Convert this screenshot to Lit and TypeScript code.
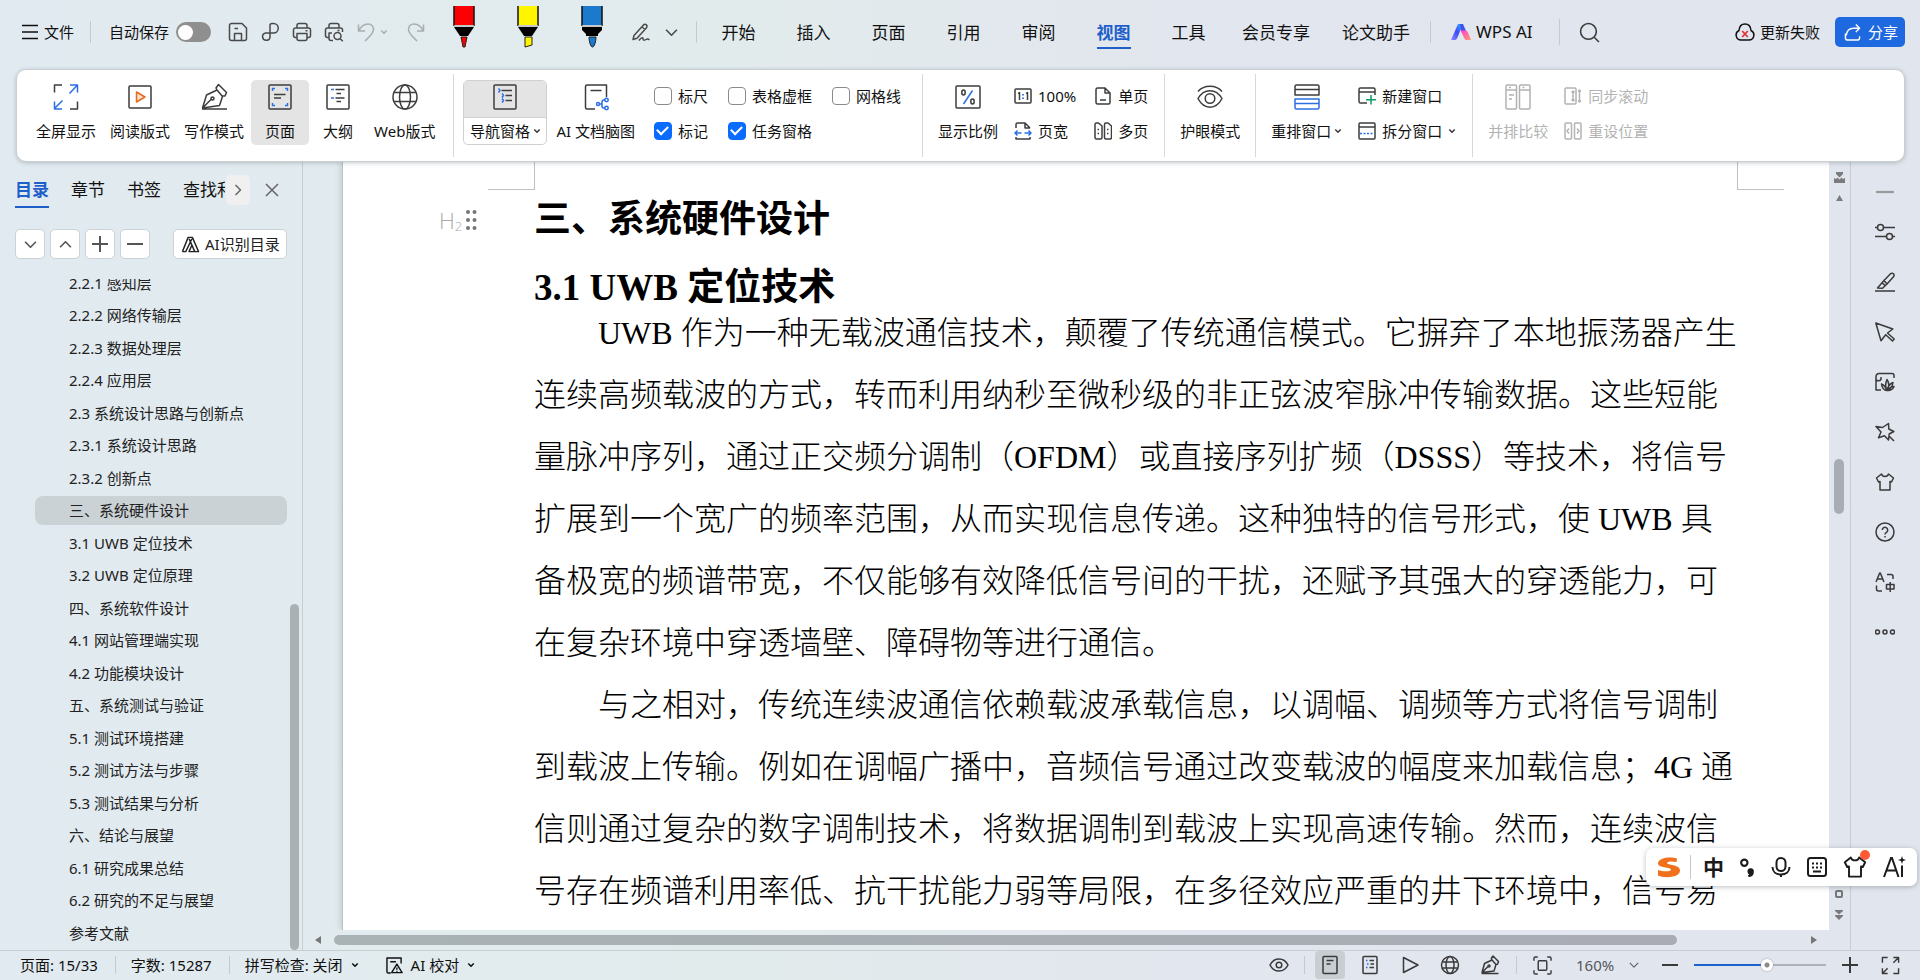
import { LitElement, html, css, svg, nothing } from "lit";
import { customElement, state } from "lit/decorators.js";
import { classMap } from "lit/directives/class-map.js";

/* ---------- icon library: [viewBox, content] ---------- */
const I: Record<string, [number, number, unknown]> = {
  menu: [16, 16, svg`<path d="M0 1.5h16M0 8h16M0 14.5h16"/>`],
  save: [20, 20, svg`<path d="M1.5 3.5a2 2 0 0 1 2-2H14l4.5 4.5v10.500a2 2 0 0 1-2 2h-13a2 2 0 0 1-2-2zM6.500 18v-6.500h7V18M6.500 6.500h3.500"/>`],
  pdf: [20, 20, svg`<path d="M10 14.500V3.500a2 2 0 0 1 2-2h1.500a4.750 4.750 0 0 1 0 9.500H5.500a3.700 3.700 0 1 0 4.500 3.500"/>`],
  print: [20, 20, svg`<path d="M5 6V3.500a2 2 0 0 1 2-2h6a2 2 0 0 1 2 2V6M5 15.500H3.500a2 2 0 0 1-2-2V8a2 2 0 0 1 2-2h13a2 2 0 0 1 2 2v5.500a2 2 0 0 1-2 2H15M5 11.500h10v5a2 2 0 0 1-2 2H7a2 2 0 0 1-2-2zM13.500 8.800h2"/>`],
  preview: [20, 20, svg`<path d="M5 6V3.500a2 2 0 0 1 2-2h6a2 2 0 0 1 2 2V6M18.500 10V8a2 2 0 0 0-2-2h-13a2 2 0 0 0-2 2v5.500a2 2 0 0 0 2 2H5M8 11H5v5.500a2 2 0 0 0 2 2h2M13.500 8.500h2"/><circle cx="13.500" cy="14" r="3.500"/><path d="M16.200 16.700l2.600 2.500"/>`],
  undo: [20, 20, svg`<path d="M2.500 2.500v6.500h6.500M2.700 8.800C5 4.500 8.500 2 12 2c3.500 0 5.500 2.500 5.500 5.500 0 2.800-2 5-5 8l-3.500 3.500"/>`],
  redo: [20, 20, svg`<path d="M17.500 2.500v6.500h-6.500M17.300 8.800C15 4.500 11.500 2 8 2 4.500 2 2.500 4.500 2.500 7.500c0 2.800 2 5 5 8l3.500 3.500"/>`],
  down: [12, 12, svg`<path d="M1 3.500l5 5 5-5"/>`],
  up: [12, 12, svg`<path d="M1 8.500l5-5 5 5"/>`],
  right: [12, 12, svg`<path d="M3.500 1l5 5-5 5"/>`],
  tiny: [8, 8, svg`<path d="M1.300 2.500L4 5.200l2.700-2.700" stroke-width="1.600"/>`],
  sign: [20, 20, svg`<path d="M3 13.500L12.500 3a2 2 0 0 1 3 2.700L6 16.200l-4 1.300zM11 5l3 2.500M8 18.500c2-3 4-3.500 4-1.800s1.500 1.800 3 .8 2.500-.5 3.500.3"/>`],
  search: [20, 20, svg`<circle cx="9" cy="9" r="7.500"/><path d="M14.500 14.500l4.500 4.500"/>`],
  cloudx: [20, 20, svg`<path d="M6 18a5 5 0 0 1-2-9.500C4.300 4.500 6.500 2 10 2s5.700 2.500 6 6.500A5 5 0 0 1 14 18z"/><path d="M7.200 9l5.600 6M12.800 9L7.200 15" stroke="#e03535" stroke-width="1.800"/>`],
  share: [18, 20, svg`<path d="M1.500 11v4.500a2.500 2.500 0 0 0 2.500 2.500h10a2.500 2.500 0 0 0 2.500-2.500V14M2.500 13C3 8 6 5.500 10 5.500h6.500M12.500 1.500l4 4-4 4"/>`],
  full: [28, 28, svg`<path d="M2.500 9.500V2H10M25.500 18.500V26H18"/><path d="M17.500 10.500L25 2.500M18 2h7.500v7.500M10.500 17.500L3 25M2.500 18.500V26H10" stroke="#2b6fe3"/>`],
  read: [28, 28, svg`<rect x="3" y="3" width="22" height="22" rx="1"/><path d="M10.500 9v10l8.500-5z" fill="#fbe0cf" stroke="#e56a22"/>`],
  write: [28, 28, svg`<path d="M2 26h25M2.500 25L6.500 12 17 7l5.500 6.500-3 9L2.500 25l9-9M17 7l-1-2 2.500-3.500 8 8L25 13h-2.500"/><circle cx="12.500" cy="15.500" r="1.500"/>`],
  page: [28, 28, svg`<rect x="3" y="2" width="22" height="24" rx="1"/><path d="M8 11.500h11.500M8 15h7"/><path d="M6.500 8V5.500H9M19 5.500h2.500V8M6.500 20v2.500H9M19 22.500h2.500V20" stroke="#2b6fe3"/>`],
  outline: [28, 28, svg`<rect x="3" y="2" width="22" height="24" rx="1"/><path d="M11.500 6.500h9M12.500 10.500h4.500M11.500 15h9M12.500 18.500h4.500"/><path d="M7 6.500h3M7 15h3" stroke="#2b6fe3"/>`],
  globe: [28, 28, svg`<circle cx="14" cy="14" r="12"/><ellipse cx="14" cy="14" rx="5.500" ry="12"/><path d="M3.200 9.500h21.600M3.200 18.500h21.600"/>`],
  nav: [28, 28, svg`<rect x="3" y="2" width="22" height="24" rx="1"/><path d="M10.500 7.500h10.500M14.500 12.500h6.500M14.500 17.500h6.500"/><path d="M7.500 5.500l1.500 2-1.500 2M11 10.500l1.500 2-1.500 2M11 15.500l1.500 2-1.500 2" stroke="#2b6fe3"/>`],
  mind: [28, 28, svg`<path d="M13 26H5a1.500 1.500 0 0 1-1.500-1.500v-21A1.500 1.500 0 0 1 5 2h19.500v12M8.500 7.500h11"/><g stroke="#2b6fe3"><path d="M17.500 21h2.500m3-4h-1a2 2 0 0 0-2 2v4a2 2 0 0 0 2 2h1"/><circle cx="24.500" cy="17" r="1.700"/><circle cx="24.500" cy="25" r="1.700"/><circle cx="16" cy="21" r="1.500"/></g>`],
  ratio: [28, 28, svg`<rect x="2" y="3" width="24" height="22" rx="1"/><path d="M18.500 7.500L9.500 21" stroke="#2b6fe3"/><ellipse cx="9.500" cy="9.500" rx="1.700" ry="2.500"/><ellipse cx="18.500" cy="18.500" rx="1.700" ry="2.500"/>`],
  one: [18, 18, svg`<rect x="1" y="2" width="16" height="14" rx="1"/><path d="M4 6.500l1.500-1v7.500M12 6.500l1.500-1v7.500"/><path d="M9 7v1.500M9 10.500V12" stroke="#2b6fe3" stroke-width="1.800"/>`],
  single: [18, 18, svg`<path d="M11 1H3.500A1.500 1.500 0 0 0 2 2.500v13A1.500 1.500 0 0 0 3.500 17h11a1.500 1.500 0 0 0 1.500-1.500V6zM11 1v5h5M6 13h6"/>`],
  pwide: [18, 18, svg`<path d="M2 6V2.500A1.500 1.500 0 0 1 3.500 1H11l5 5M11 1v5h5M2 15v2h14v-2"/><path d="M7.500 11h-6.500M3.500 8.500L1 11l2.500 2.500M10.500 11h6.500M14.500 8.500L17 11l-2.500 2.500" stroke="#2b6fe3"/>`],
  multi: [18, 18, svg`<path d="M1 2.500A1.500 1.500 0 0 1 2.500 1h2L8 4v11.500A1.500 1.500 0 0 1 6.500 17h-4A1.500 1.500 0 0 1 1 15.500zM10.500 2.500A1.500 1.500 0 0 1 12 1h2l3.500 3v11.500A1.500 1.500 0 0 1 16 17h-4a1.500 1.500 0 0 1-1.500-1.500zM3.500 7.500H5M3.500 11.500H5M13 7.500h1.500M13 11.500h1.500"/>`],
  eye: [28, 28, svg`<path d="M2 8.500C8 1.500 20 1.500 26 8.500"/><path d="M2 15.500C8 5 20 5 26 15.500 20 27 8 27 2 15.500z"/><circle cx="14" cy="15.500" r="4.800"/>`],
  arrange: [28, 28, svg`<path d="M2 3.500A1.500 1.500 0 0 1 3.500 2h21A1.500 1.500 0 0 1 26 3.500V12H2zM2 6.500h24"/><path d="M2 16h24v8.500a1.500 1.500 0 0 1-1.500 1.500h-21A1.500 1.500 0 0 1 2 24.500zM2 20.500h24" stroke="#2b6fe3"/>`],
  newwin: [18, 18, svg`<path d="M9 16H2.500A1.500 1.500 0 0 1 1 14.500v-12A1.500 1.500 0 0 1 2.500 1h13A1.500 1.500 0 0 1 17 2.500V8M1 5h16"/><path d="M13 8v9.500M8 12.700h10" stroke="#0d9a62"/>`],
  split: [18, 18, svg`<rect x="1" y="1" width="16" height="16" rx="1"/><path d="M1 5h16"/><path d="M2 11.500h14" stroke="#2b6fe3" stroke-dasharray="2 1.500"/>`],
  compare: [28, 28, svg`<rect x="2" y="2" width="10.500" height="24" rx="1"/><rect x="15.500" y="2" width="10.500" height="24" rx="1"/><path d="M2 7h10.500M15.500 7H26M5 4.500h2M18.500 4.500h2M5 12h5M5 16h3"/>`],
  sync: [18, 18, svg`<rect x="1" y="1" width="11" height="16" rx="1"/><path d="M9 4v10M7.500 5.500L9 4l1.500 1.500M7.500 12.500L9 14l1.500-1.500M15.500 3v12M14 4.500L15.500 3 17 4.500M14 13.500l1.500 1.500 1.500-1.500"/>`],
  reset: [18, 18, svg`<rect x="1" y="1" width="6.500" height="16" rx="1"/><rect x="10.500" y="1" width="6.500" height="16" rx="1"/><path d="M5 6.500L3 9l2 2.500M13 6.500L15 9l-2 2.500"/>`],
  x: [16, 16, svg`<path d="M2 2l12 12M14 2L2 14"/>`],
  plus: [18, 18, svg`<path d="M9 1v16M1 9h16" stroke-width="2"/>`],
  minus: [18, 18, svg`<path d="M1 9h16" stroke-width="2"/>`],
  ai: [20, 20, svg`<path d="M1.500 17.500L7.500 2.500h4.500L18.500 17.500H14.500L8.500 4M1.500 17.500H5L11.500 4M8.500 17.500h6l-3-7z"/>`],
  sliders: [20, 20, svg`<circle cx="5.500" cy="5.500" r="3"/><path d="M0 5.500h2.500M8.500 5.500H20"/><circle cx="14.500" cy="14.500" r="3"/><path d="M0 14.500h11.500M17.500 14.500H20"/>`],
  marker: [20, 20, svg`<path d="M0 19h20M2.500 16L9 8.500l6.500-6.700a2 2 0 0 1 3 3L12 12l-4.500 4.300zM9 8.500l3 3.500M7.200 10.800l2.700 2.800"/>`],
  cursor: [20, 20, svg`<path d="M.8 1l17 6-5.300 4 6.700 6-1.700 2-6.800-6.300-4.700 6z"/>`],
  image: [20, 20, svg`<path d="M19 6V3.500a2 2 0 0 0-2-2H4a3 3 0 0 0-3 3V18h5M1 7.500a3 3 0 0 0 5 0V5"/><path d="M12 18.500c-2-4-1.500-8 0-11 2 3 2.500 7 0 11zM11.500 18.500C8.500 18 7 15.500 6.500 12c2.500 1 4.500 3 5 6.500zM12.500 18.500c0-4 2-6.500 5.500-8-.5 3-1.500 6.500-5.500 8zM13 18.500c1.500-3 3.500-4 6-4-1 2.500-3 4-6 4z"/>`],
  star: [20, 20, svg`<path d="M13.500 1.500l.3 5.500 5 2.500-4.600 2.500-.7 6-4-4.300-6 2L6 10 1 4.500l6.500 1zM14.500 14.500l4.500 4.500"/>`],
  shirt: [20, 20, svg`<path d="M6.500 2L1.500 6l2 4L5 9.500V18h10V9.500l1.500.5 2-4-5-4c-.5 1.700-2 2.500-3.500 2.500S7 3.700 6.500 2z"/>`],
  help: [20, 20, svg`<circle cx="10" cy="10" r="9"/><path d="M7.300 8a2.700 2.700 0 1 1 4.200 2.300C10.400 11 10 11.300 10 12.500M10 14v1.500"/>`],
  trans: [20, 20, svg`<path d="M1 10L4.700 1h.6L9 10M2.500 7h5M12 2.500h4a2 2 0 0 1 2 2V7M1.500 13.500V17a2 2 0 0 0 2 2H7M11.500 12.500h7.500v4.500h-7.500zM15.200 10v10"/>`],
  dots: [20, 20, svg`<circle cx="2.500" cy="10" r="2"/><circle cx="10" cy="10" r="2"/><circle cx="17.500" cy="10" r="2"/>`],
  seye: [20, 20, svg`<path d="M1 10C5 2 15 2 19 10 15 18 5 18 1 10z"/><circle cx="10" cy="10" r="2.800"/>`],
  doc: [20, 20, svg`<rect x="3" y="1.500" width="14" height="17" rx="1"/><path d="M6.500 5.500h7M6.500 9h4"/>`],
  sout: [20, 20, svg`<rect x="3" y="1.500" width="14" height="17" rx="1"/><path d="M9.500 5.500H14M10.500 9H14M9.500 12.500H14"/><path d="M6 5.500h1.500M7 9h1.500M6 12.500h1.500" stroke="#2b6fe3"/>`],
  play: [20, 20, svg`<path d="M3.500 2.500v15L18 10z"/>`],
  web: [20, 20, svg`<circle cx="10" cy="10" r="8.500"/><ellipse cx="10" cy="10" rx="4" ry="8.500"/><path d="M2.300 7h15.400M2.300 13h15.400"/>`],
  nib: [20, 20, svg`<path d="M1.500 18.500h17M2 17.500L4.500 8.500l7.500-3.500 4 4.500-2 6.500L2 17.500l6-6M12 5l-.7-1.500L13 1l5.500 5.500-1 2.700-1.500.3"/><circle cx="9" cy="11" r="1"/>`],
  fit: [20, 20, svg`<path d="M1 5V2.500A1.500 1.500 0 0 1 2.500 1H5M15 1h2.500A1.500 1.500 0 0 1 19 2.500V5M1 15v2.500A1.500 1.500 0 0 0 2.500 19H5M15 19h2.500a1.500 1.500 0 0 0 1.500-1.500V15"/><rect x="5.500" y="5" width="9" height="10" rx="1"/>`],
  sfull: [20, 20, svg`<path d="M1.500 7V1.500H7M18.500 13v5.500H13M13 1.500h5.500V7M18.500 1.500L13 7M7 18.500H1.500V13M1.500 18.500L7 13"/>`],
  proof: [18, 18, svg`<path d="M5 17H2.500A1.500 1.500 0 0 1 1 15.500V1h15v6M4.500 5h6"/><path d="M11.500 7.500L17 16.500H6zM11.500 11v2.500M11.500 14.500v1"/>`],
  mic: [20, 20, svg`<rect x="5.500" y="1" width="9" height="13" rx="4.500"/><path d="M1.500 10c0 4.500 3.500 7.500 8.500 7.500s8.500-3 8.500-7.500M10 17.500V20"/>`],
  keys: [20, 20, svg`<rect x="1" y="1" width="18" height="18" rx="2.500"/><path d="M5 6.500h2M9 6.500h2M13 6.500h2M5 10.500h2M9 10.500h2M13 10.500h2M6 14.500h8"/>`],
  punct: [14, 18, svg`<circle cx="4" cy="4.500" r="3"/><path d="M12 12.500a2 2 0 1 0-1.800 2.200c0 1-.5 1.800-1.700 2.300 2.500-.3 3.600-2.300 3.500-4.500z" fill="currentColor"/>`],
};

const icon = (name: string, w = 20, sw = 1.5) => {
  const [vw, vh, body] = I[name];
  return html`<svg width=${w} height=${Math.round((w * vh) / vw)} viewBox="0 0 ${vw} ${vh}" fill="none" stroke="currentColor"
    stroke-width=${sw} stroke-linejoin="round" stroke-linecap="butt" aria-hidden="true">${body}</svg>`;
};

const base = css`
  :host, * { box-sizing: border-box; }
  svg { display: block; flex: none; }
  button { font: inherit; color: inherit; background: none; border: 0; padding: 0; margin: 0; white-space: nowrap; cursor: pointer; }
  button:disabled { color: #b3b3b3; }
  .blank { color: #3c3c3c; }
`;

/* ---------- title bar ---------- */
@customElement("wps-topbar")
class WpsTopbar extends LitElement {
  static styles = [base, css`
    :host { display: flex; align-items: center; height: 69px; padding: 0 15px 5px 22px; white-space: nowrap; }
    .file { display: flex; align-items: center; gap: 6px; }
    .sep { width: 1px; height: 22px; background: #c5cacd; margin: 0 18px 0 16px; }
    .auto { display: flex; align-items: center; gap: 7px; }
    .auto input { appearance: none; margin: 0; width: 35px; height: 20px; border-radius: 10px; background: #8f8f8f; display: flex; align-items: center; padding: 0 2px; }
    .auto input::before { content: ""; width: 15px; height: 15px; border-radius: 50%; background: #fff; }
    .quick { display: flex; align-items: center; gap: 12px; margin-left: 17px; color: #4a4a4a; }
    .hist { display: flex; align-items: center; gap: 4px; margin-left: 12px; color: #a9adb0; }
    .hist .redo { margin-left: 14px; }
    .pens { display: flex; gap: 42px; margin-left: 27px; align-self: flex-start; padding-top: 6px; }
    .edit { display: flex; align-items: center; gap: 14px; margin-left: 28px; color: #4a4a4a; }
    .sep.two { margin: 0 4px 0 18px; }
    nav { display: flex; }
    .tab { min-width: 75px; padding: 0 16px; font-size: 17px; line-height: 24px; display: flex; justify-content: center; }
    .tab span { padding: 3px 0 2px; border-bottom: 2px solid transparent; margin-top: 2px; }
    .tab.on span { color: #1e5fca; font-weight: 700; border-color: #1e5fca; }
    .sep.three { margin: 0 20px 0 4px; }
    .wps { display: flex; align-items: center; gap: 5px; font-size: 17px; }
    .sep.four { height: 26px; margin: 0 19px 0 26px; }
    .fill { flex: 1; }
    .upd { display: flex; align-items: center; gap: 5px; margin-right: 15px; }
    .share { display: flex; align-items: center; gap: 7px; width: 70px; height: 30px; padding-left: 9px; border-radius: 5px; background: #1f69e0; color: #fff; }
  `];
  private tabs = ["开始", "插入", "页面", "引用", "审阅", "视图", "工具", "会员专享", "论文助手"];
  private pen(color: string, kind: number) {
    const body = kind === 2 ? "M1 21h20v3l-4 4v2H5v-2l-4-4z" : "M1 21h20l-6 9H7z";
    const tips = [svg`<path d="M8 31h6l-2 10h-2z"/>`, svg`<path d="M8 31h7v8l-7 2z"/>`, svg`<path d="M8 31h7c0 4-1.500 10-3.500 10S8 35 8 31z"/>`];
    return html`<svg width="22" height="42" viewBox="0 0 22 42" aria-hidden="true"><path d="M1 0h20v19H1z" fill=${color}/>
      <path d="M1 0v20M21 0v20" stroke="#111" stroke-width="1.500"/><path d="M1 20h20" stroke="#bbb" stroke-width="1.500"/>
      <path d=${body} fill="#000"/><g fill=${color} stroke="#222" stroke-width="1">${tips[kind]}</g></svg>`;
  }
  render() {
    return html`
      <button class="file">${icon("menu", 16, 1.6)}<span>文件</span></button>
      <i class="sep"></i>
      <label class="auto">自动保存<input type="checkbox" role="switch" /></label>
      <div class="quick">${["save", "pdf", "print", "preview"].map((n) => html`<button aria-label=${n}>${icon(n, 20)}</button>`)}</div>
      <div class="hist"><button aria-label="撤销">${icon("undo", 20)}</button>${icon("tiny", 8)}<button class="redo" aria-label="恢复">${icon("redo", 20)}</button></div>
      <div class="pens">
        <button aria-label="红笔">${this.pen("#fb0000", 0)}</button>
        <button aria-label="荧光笔">${this.pen("#fff500", 1)}</button>
        <button aria-label="蓝笔">${this.pen("#1b7acb", 2)}</button>
      </div>
      <div class="edit"><button aria-label="签批">${icon("sign", 20)}</button><button aria-label="更多">${icon("down", 13)}</button></div>
      <i class="sep two"></i>
      <nav>${this.tabs.map((t) => html`<button class=${classMap({ tab: true, on: t === "视图" })}><span>${t}</span></button>`)}</nav>
      <i class="sep three"></i>
      <button class="wps">
        <svg width="20" height="16" viewBox="0 0 20 16" aria-hidden="true">
          <defs><linearGradient id="a" x1="0" y1="1" x2="1" y2="0"><stop offset="0" stop-color="#8b8bff"/><stop offset=".5" stop-color="#3d4bf5"/><stop offset="1" stop-color="#2fc0ff"/></linearGradient>
          <linearGradient id="b" x1="0" y1="0" x2="1" y2="1"><stop offset="0" stop-color="#ff3fd8"/><stop offset="1" stop-color="#ff9a6a"/></linearGradient></defs>
          <path d="M7 0h5L6 14.500A2.500 2.500 0 0 1 3.500 16H0z" fill="url(#a)"/><path d="M9 0h3l3 7h-5z" fill="#4250f2"/>
          <path d="M9.500 6.500h4.500A3 3 0 0 1 17 8.500L20 16h-4.500a2 2 0 0 1-2-1.500z" fill="url(#b)"/></svg>
        <span>WPS AI</span></button>
      <i class="sep four"></i>
      <button class="blank" aria-label="搜索">${icon("search", 21)}</button>
      <div class="fill"></div>
      <button class="upd">${icon("cloudx", 20)}<span>更新失败</span></button>
      <button class="share">${icon("share", 17)}<span>分享</span></button>`;
  }
}

/* ---------- ribbon ---------- */
@customElement("wps-ribbon")
class WpsRibbon extends LitElement {
  static styles = [base, css`
    :host { display: flex; position: relative; z-index: 2; margin: 0 15px 0 16px; height: 93px; padding: 4px 0 4px 12px; border: 1px solid #c9ced2; border-radius: 10px;
      background: #fff; box-shadow: 0 1px 4px rgb(90 105 115 / 35%); white-space: nowrap; }
    .group { display: flex; padding: 6px 8px 0; }
    .group + .group { border-left: 1px solid #d6d8da; }
    .group:first-child { padding: 6px 11px 0 0; }
    .group.wide { padding-right: 16px; }
    .group.view { padding: 6px 21px 0 9px; }
    .big { display: flex; flex-direction: column; align-items: center; gap: 8px; height: 65px; min-width: 58px; padding: 3px 7px 2px; line-height: 24px; border-radius: 5px; color: #111; }
    .big svg { color: #3d3d3d; }
    .big:disabled { color: #b3b3b3; }
    .big:disabled svg, .pair button:disabled svg { color: #b3b3b3; }
    .big.on { background: #e4e4e4; }
    .big span { display: flex; align-items: center; gap: 3px; }
    .big.nav { border: 1px solid #d0d0d0; padding: 0; width: 84px; gap: 0; overflow: hidden; margin-right: 2px; }
    .nav .top { width: 100%; height: 37px; background: #e4e4e4; border-bottom: 1px solid #d0d0d0; display: flex; justify-content: center; align-items: flex-start; padding-top: 2px; }
    .nav .lab { padding-top: 1px; }
    .checks, .pair { display: grid; grid-template-rows: 35px 35px; align-items: center; align-content: start; margin-top: -2px; }
    .checks { grid-template-columns: 74px 104px auto; margin-left: 12px; }
    .pair { grid-template-columns: auto auto; column-gap: 18px; margin-left: 9px; }
    .pair.one { grid-template-columns: auto; }
    .pair button { display: flex; align-items: center; gap: 6px; }
    .pair svg { color: #3d3d3d; }
    label { display: flex; align-items: center; gap: 6px; }
    input { appearance: none; width: 18px; height: 18px; margin: 0; border: 1px solid #8b8b8b; border-radius: 4px; background: #fff; display: grid; place-items: center; }
    input:checked { background: #0a6cff; border-color: #0a6cff; }
    input:checked::before { content: ""; width: 9px; height: 5px; border: solid #fff; border-width: 0 0 2px 2px; transform: rotate(-45deg) translate(1px, -1px); }
  `];
  private big(ic: string, label: string, o: { on?: boolean; dis?: boolean; drop?: boolean } = {}) {
    return html`<button class=${classMap({ big: true, on: !!o.on })} ?disabled=${o.dis}>${icon(ic, 28)}<span>${label}${o.drop ? icon("tiny", 8) : nothing}</span></button>`;
  }
  private small(ic: string, label: string, o: { dis?: boolean; drop?: boolean } = {}) {
    return html`<button ?disabled=${o.dis}>${icon(ic, 18)}<span>${label}</span>${o.drop ? icon("tiny", 8) : nothing}</button>`;
  }
  private check(label: string, on = false) {
    return html`<label><input type="checkbox" .checked=${on} />${label}</label>`;
  }
  render() {
    return html`
      <div class="group">
        ${this.big("full", "全屏显示")}${this.big("read", "阅读版式")}${this.big("write", "写作模式")}
        ${this.big("page", "页面", { on: true })}${this.big("outline", "大纲")}${this.big("globe", "Web版式")}
      </div>
      <div class="group view">
        <button class="big nav"><span class="top">${icon("nav", 28)}</span><span class="lab">导航窗格${icon("tiny", 8)}</span></button>
        ${this.big("mind", "AI 文档脑图")}
        <div class="checks">${this.check("标尺")}${this.check("表格虚框")}${this.check("网格线")}${this.check("标记", true)}${this.check("任务窗格", true)}</div>
      </div>
      <div class="group wide">
        ${this.big("ratio", "显示比例")}
        <div class="pair">${this.small("one", "100%")}${this.small("single", "单页")}${this.small("pwide", "页宽")}${this.small("multi", "多页")}</div>
      </div>
      <div class="group">${this.big("eye", "护眼模式")}</div>
      <div class="group wide">
        ${this.big("arrange", "重排窗口", { drop: true })}
        <div class="pair one">${this.small("newwin", "新建窗口")}${this.small("split", "拆分窗口", { drop: true })}</div>
      </div>
      <div class="group">
        ${this.big("compare", "并排比较", { dis: true })}
        <div class="pair one">${this.small("sync", "同步滚动", { dis: true })}${this.small("reset", "重设位置", { dis: true })}</div>
      </div>`;
  }
}

/* ---------- navigation pane ---------- */
@customElement("wps-outline")
class WpsOutline extends LitElement {
  static styles = [base, css`
    :host { display: flex; flex-direction: column; min-height: 0; border-right: 1px solid #c8cdd0; }
    .tabs { display: flex; align-items: center; padding: 12px 0 0 15px; height: 48px; font-size: 17px; white-space: nowrap; }
    .strip { display: flex; gap: 22px; width: 210px; overflow: hidden; }
    .strip button { line-height: 24px; padding: 2px 0 4px; border-bottom: 2px solid transparent; }
    .strip .on { color: #1e5fca; font-weight: 700; border-color: #1e5fca; }
    .more { width: 24px; height: 30px; margin: -4px 14px 0 1px; border-radius: 5px; background: #f0f0f0; color: #666; display: grid; place-items: center; }
    .close { color: #666; margin-top: -4px; }
    .tools { display: flex; gap: 5px; padding: 19px 0 0 15px; }
    .tools button { width: 30px; height: 30px; border: 1px solid #cdd2d5; border-radius: 5px; background: #fff; display: grid; place-items: center; color: #555; }
    .tools .aib { display: flex; width: 114px; align-items: center; gap: 5px; padding-left: 7px; margin-left: 18px; color: #222; }
    .body { flex: 1; min-height: 0; display: flex; margin-top: 20px; overflow: hidden; }
    ul { flex: 1; margin: 0; padding: 0 3px 1px 35px; list-style: none; display: flex; flex-direction: column; justify-content: flex-end; min-height: 0; }
    li { flex: none; height: 32px; display: flex; align-items: center; }
    li:nth-child(even) { height: 33px; }
    a { flex: 1; height: 29px; line-height: 29px; padding-left: 34px; border-radius: 8px; color: #222; text-decoration: none; white-space: nowrap; }
    a.on { background: #cbd2d5; }
    .track { width: 12px; display: flex; flex-direction: column; justify-content: flex-end; }
    .thumb { width: 9px; height: 51.500%; border-radius: 5px; background: #a9b1b4; }
  `];
  @state() private sel = "三、系统硬件设计";
  private items = ["2.2.1 感知层", "2.2.2 网络传输层", "2.2.3 数据处理层", "2.2.4 应用层", "2.3 系统设计思路与创新点", "2.3.1 系统设计思路", "2.3.2 创新点",
    "三、系统硬件设计", "3.1 UWB 定位技术", "3.2 UWB 定位原理", "四、系统软件设计", "4.1 网站管理端实现", "4.2 功能模块设计", "五、系统测试与验证",
    "5.1 测试环境搭建", "5.2 测试方法与步骤", "5.3 测试结果与分析", "六、结论与展望", "6.1 研究成果总结", "6.2 研究的不足与展望", "参考文献"];
  render() {
    return html`
      <div class="tabs">
        <div class="strip"><button class="on">目录</button><button>章节</button><button>书签</button><button>查找和替换</button></div>
        <button class="more" aria-label="更多">${icon("right", 12)}</button>
        <button class="close" aria-label="关闭">${icon("x", 16)}</button>
      </div>
      <div class="tools">
        <button aria-label="展开">${icon("down", 13)}</button><button aria-label="收起">${icon("up", 13)}</button>
        <button aria-label="放大">${icon("plus", 18)}</button><button aria-label="缩小">${icon("minus", 18)}</button>
        <button class="aib">${icon("ai", 19)}<span>AI识别目录</span></button>
      </div>
      <div class="body">
        <ul>${this.items.map((t) => html`<li><a href="#" class=${t === this.sel ? "on" : ""} @click=${(e: Event) => { e.preventDefault(); this.sel = t; }}>${t}</a></li>`)}</ul>
        <div class="track"><div class="thumb"></div></div>
      </div>`;
  }
}

/* ---------- document ---------- */
@customElement("wps-document")
class WpsDocument extends LitElement {
  static styles = [base, css`
    :host { display: grid; grid-template: minmax(0, 1fr) 20px / minmax(0, 1fr) 21px; min-width: 0; min-height: 0; }
    .view { overflow: hidden; padding-left: 39px; }
    .page { min-height: 100%; background: #fff; border-left: 1px solid #b9bfc2; box-shadow: -2px 0 5px rgb(100 115 125 / 22%); color: #000;
      font-family: "Liberation Serif", "Noto Sans CJK SC", serif; white-space: nowrap; }
    .marks { display: flex; justify-content: space-between; padding: 0 45px 0 145px; }
    .marks i { width: 47px; height: 28px; border: solid #c0c0c0; border-width: 0 1px 1px 0; }
    .marks i + i { border-width: 0 0 1px 1px; }
    .h { display: grid; grid-template-columns: 191px auto; align-items: center; }
    h1, h2 { margin: 0; font-size: 37px; font-weight: 700; }
    h1 { line-height: 60px; }
    h2 { line-height: 28px; padding: 24px 0 0 191px; }
    .tag { display: flex; align-items: center; gap: 4px; padding-left: 96px; color: #aaa; font: 22px/22px "Open Sans", sans-serif; font-weight: 300; }
    .tag sub { font-size: 13px; line-height: 10px; vertical-align: -2px; }
    p { margin: 0; padding-left: 191px; font-size: 32px; line-height: 62px; font-weight: 300; text-indent: 64px; }
    .vs { display: flex; flex-direction: column; align-items: center; color: #7b7b7b; padding: 10px 1px 10px 0; }
    .vs .thumb { width: 10px; height: 55px; border-radius: 5px; background: #a9acb5; }
    .up { margin: 12px 0 258px; }
    .sq { width: 8px; height: 8px; border: 2px solid #777; border-radius: 2px; margin: auto 0 12px; }
    .hs { display: flex; align-items: center; padding: 0 12px 0 12px; }
    .hs .thumb { flex: 0 1 1343px; height: 10px; margin-left: 13px; border-radius: 5px; background: linear-gradient(90deg, #a9b2b4, #a9acb5); }
    .hs .r { margin-left: auto; }
  `];
  private paras = [
    ["UWB 作为一种无载波通信技术，颠覆了传统通信模式。它摒弃了本地振荡器产生", "连续高频载波的方式，转而利用纳秒至微秒级的非正弦波窄脉冲传输数据。这些短能",
      "量脉冲序列，通过正交频分调制（OFDM）或直接序列扩频（DSSS）等技术，将信号", "扩展到一个宽广的频率范围，从而实现信息传递。这种独特的信号形式，使 UWB 具",
      "备极宽的频谱带宽，不仅能够有效降低信号间的干扰，还赋予其强大的穿透能力，可", "在复杂环境中穿透墙壁、障碍物等进行通信。"],
    ["与之相对，传统连续波通信依赖载波承载信息，以调幅、调频等方式将信号调制", "到载波上传输。例如在调幅广播中，音频信号通过改变载波的幅度来加载信息；4G 通",
      "信则通过复杂的数字调制技术，将数据调制到载波上实现高速传输。然而，连续波信", "号存在频谱利用率低、抗干扰能力弱等局限，在多径效应严重的井下环境中，信号易"],
  ];
  render() {
    return html`
      <div class="view"><article class="page">
        <div class="marks"><i></i><i></i></div>
        <div class="h"><div class="tag"><span>H<sub>2</sub></span>
          <svg width="11" height="20" viewBox="0 0 11 20" fill="#777" aria-hidden="true">${[2, 10, 18].map((y) => svg`<circle cx="2" cy=${y} r="2"/><circle cx="8.500" cy=${y} r="2"/>`)}</svg></div>
          <h1>三、系统硬件设计</h1></div>
        <h2>3.1 UWB 定位技术</h2>
        ${this.paras.map((p) => html`<p>${p.map((l, i) => html`${i ? html`<br />` : nothing}${l}`)}</p>`)}
      </article></div>
      <div class="vs">
        <svg width="11" height="11" viewBox="0 0 11 11" fill="currentColor"><path d="M2 0h7v2L5.500 5.500 2 2zM0 6l2 1 1.500-1.500L5.500 7.500l2-2L9 7l2-1v5H0z"/></svg>
        <svg class="up" width="7" height="6" viewBox="0 0 7 6" fill="currentColor"><path d="M3.500 0L7 6H0z"/></svg>
        <div class="thumb"></div><div class="sq"></div>
        <svg width="8" height="10" viewBox="0 0 8 10" fill="currentColor"><path d="M0 0h8v1L4 4.500 0 1zM0 5h8v1L4 10 0 6z"/></svg>
      </div>
      <div class="hs">
        <svg width="6" height="8" viewBox="0 0 6 8" fill="#777"><path d="M6 0v8L0 4z"/></svg>
        <div class="thumb"></div>
        <svg class="r" width="6" height="8" viewBox="0 0 6 8" fill="#777"><path d="M0 0v8l6-4z"/></svg>
      </div>`;
  }
}

/* ---------- right tool rail ---------- */
@customElement("wps-rail")
class WpsRail extends LitElement {
  static styles = [base, css`
    :host { display: flex; flex-direction: column; align-items: center; gap: 20px; padding: 20px 2px 0 0; border-left: 1px solid #c8cbd0; color: #3a3a3a; }
    .dash { color: #999; }
    .list { display: flex; flex-direction: column; gap: 30px; }
  `];
  render() {
    return html`<button class="dash" aria-label="收起">${icon("minus", 20)}</button>
      <div class="list">${["sliders", "marker", "cursor", "image", "star", "shirt", "help", "trans", "dots"].map((n) => html`<button aria-label=${n}>${icon(n, 20)}</button>`)}</div>`;
  }
}

/* ---------- status bar ---------- */
@customElement("wps-status")
class WpsStatus extends LitElement {
  static styles = [base, css`
    :host { display: flex; align-items: center; height: 30px; padding: 0 20px 1px; border-top: 1px solid #c8cdd1; color: #111; white-space: nowrap; }
    .sep { width: 1px; height: 18px; background: #c5cacd; margin: 0 15px 0 17px; }
    .drop { display: flex; align-items: center; gap: 8px; margin-right: 27px; }
    .right { display: flex; align-items: center; margin-left: auto; color: #3a3a3a; }
    .right .sep { margin: 0 10px 0 15px; }
    .mode { width: 30px; height: 28px; border-radius: 4px; display: grid; place-items: center; margin-right: 10px; }
    .mode.last { margin-right: 0; }
    .mode.on { background: #c9ced3; }
    .right .sep.b { margin: 0 16px 0 11px; }
    .zoom { display: flex; align-items: center; margin: 0 22px 0 24px; color: #666; }
    select { appearance: none; border: 0; background: none; font: inherit; color: #55585c; width: 53px; padding: 0; margin: 0; }
    .range { appearance: none; width: 132px; height: 18px; margin: 0 15px; background: linear-gradient(#1f62cc, #1f62cc) 0 8px / 74px 2px no-repeat, linear-gradient(#aeb2b9, #aeb2b9) 0 8px / 100% 2px no-repeat; }
    .range::-webkit-slider-thumb { appearance: none; width: 12px; height: 12px; border-radius: 50%; background: radial-gradient(#8a8a8a 0 2px, #fff 3px); box-shadow: 0 0 2px #888; }
    .fs { margin-left: 22px; }
  `];
  render() {
    const mode = (n: string, c = "") => html`<button class="mode ${c}" aria-label=${n}>${icon(n, 20)}</button>`;
    return html`
      <span>页面: 15/33</span><i class="sep"></i><span>字数: 15287</span><i class="sep"></i>
      <button class="drop"><span>拼写检查: 关闭</span>${icon("tiny", 8)}</button>
      <button class="drop">${icon("proof", 17)}<span>AI 校对</span>${icon("tiny", 8)}</button>
      <div class="right">
        <button aria-label="护眼">${icon("seye", 20)}</button><i class="sep"></i>
        ${mode("doc", "on")}${mode("sout")}${mode("play")}${mode("web")}${mode("nib", "last")}
        <i class="sep b"></i>
        <button aria-label="适合">${icon("fit", 19)}</button>
        <label class="zoom"><select aria-label="缩放比例"><option>160%</option></select>${icon("down", 10)}</label>
        <button aria-label="缩小">${icon("minus", 18)}</button>
        <input class="range" type="range" aria-label="缩放" min="0" max="100" .value=${"56"} />
        <button aria-label="放大">${icon("plus", 18)}</button>
        <button class="fs" aria-label="全屏">${icon("sfull", 19)}</button>
      </div>`;
  }
}

/* ---------- floating input-method bar ---------- */
@customElement("ime-bar")
class ImeBar extends LitElement {
  static styles = [base, css`
    :host { display: flex; align-items: center; height: 38px; width: 271px; padding: 0 11px; justify-content: space-between; background: #fff; border-radius: 7px; box-shadow: 0 1px 5px rgb(60 70 80 / 35%); color: #1b1b1b; }
    i { width: 1px; height: 24px; background: #c8c8c8; margin: 0 -4px 0 -6px; }
    .zh { font-size: 21px; font-weight: 700; line-height: 28px; }
    .skin { position: relative; }
    .skin::after { content: ""; position: absolute; right: -3px; top: -5px; width: 10px; height: 10px; border-radius: 50%; background: #ff5a36; }
  `];
  render() {
    return html`
      <svg width="23" height="21" viewBox="0 0 23 21" aria-hidden="true"><path d="M20 1.500C14-.5 1 .5 1 6.500c0 4.500 13 3.500 13 6 0 2.300-8 2.500-13 .5v5.500c6 3 22 2.500 22-5 0-6.500-13-5-13-7.500 0-1.800 5-2 9.500-1z" fill="#f0701c"/></svg>
      <i></i><button class="zh">中</button><button aria-label="标点">${icon("punct", 15, 2)}</button>
      <button aria-label="语音">${icon("mic", 20, 2)}</button><button aria-label="键盘">${icon("keys", 20, 2)}</button>
      <button class="skin" aria-label="皮肤">${icon("shirt", 24, 1.6)}</button>
      <button aria-label="AI"><svg width="23" height="22" viewBox="0 0 23 22" fill="none" stroke="currentColor" stroke-width="2"><path d="M1 21L8 2h1l6.500 19M3.500 14.500h10M19 9.500V21"/><path d="M19 0l1 3 3 1-3 1-1 3-1-3-3-1 3-1z" fill="currentColor" stroke="none"/></svg></button>`;
  }
}

@customElement("app-root")
class AppRoot extends LitElement {
  static styles = css`
    :host { display: flex; flex-direction: column; height: 100vh; overflow: hidden; position: relative; color: #111;
      font: 15px/24px "Noto Sans", "Noto Sans CJK SC", sans-serif;
      background: linear-gradient(90deg, #e1eaf0 0%, #e2ebec 38%, #e2e6ee 62%, #e1e5ed 100%); }
    main { flex: 1; min-height: 0; display: grid; grid-template: minmax(0, 1fr) / 303px minmax(0, 1fr) 70px; }
    ime-bar { position: absolute; right: 3px; bottom: 94px; z-index: 3; }
  `;
  render() {
    return html`<wps-topbar></wps-topbar><wps-ribbon></wps-ribbon>
      <main lang="zh-CN"><wps-outline></wps-outline><wps-document></wps-document><wps-rail></wps-rail></main>
      <wps-status></wps-status><ime-bar></ime-bar>`;
  }
}
